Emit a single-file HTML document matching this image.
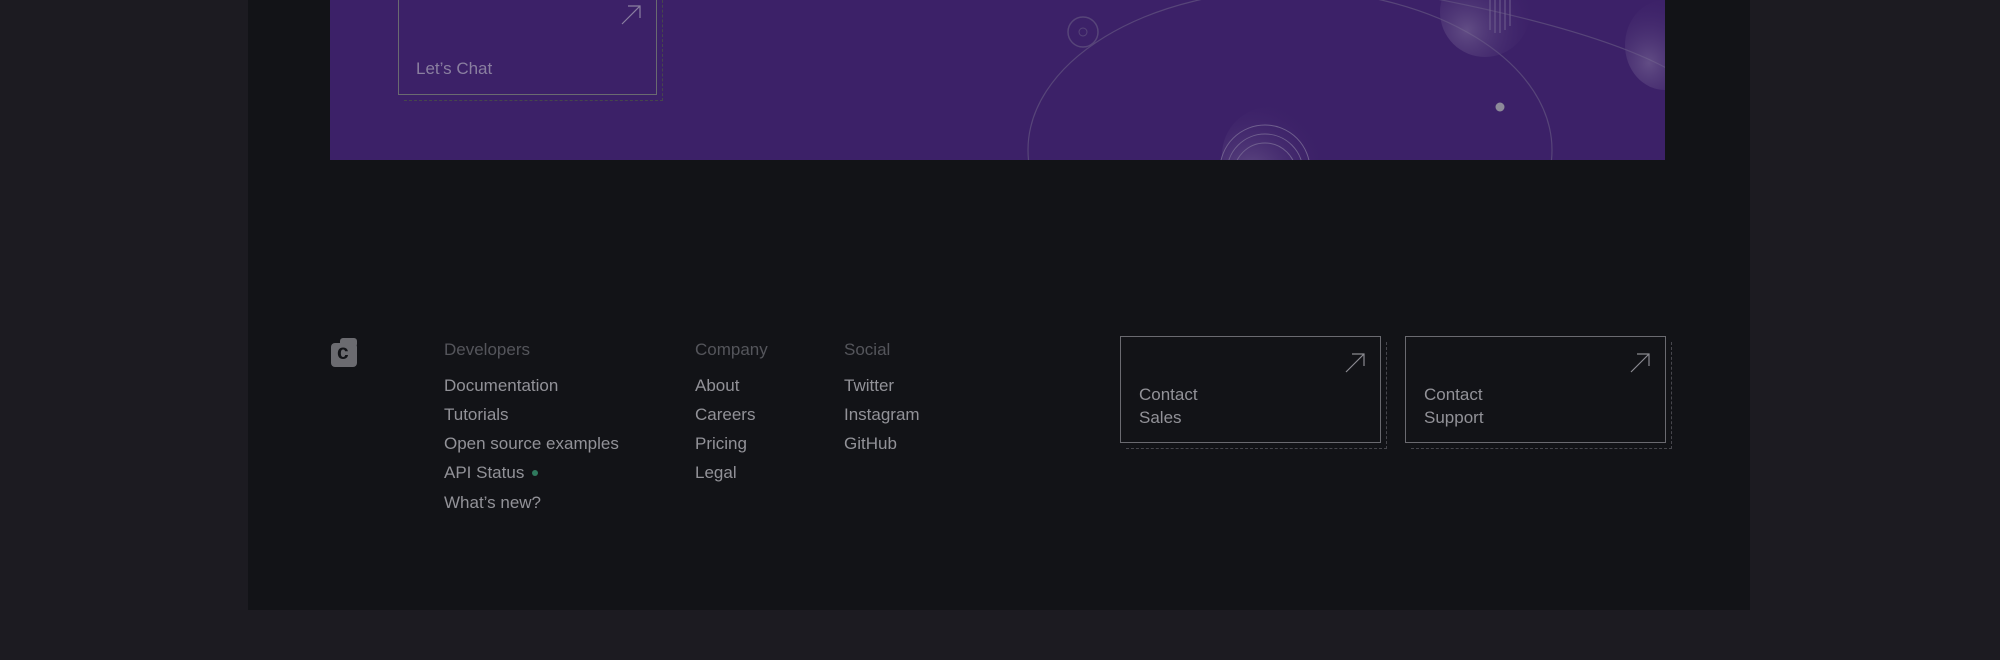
<!DOCTYPE html>
<html><head><style>
*{margin:0;padding:0;box-sizing:border-box}
body{width:2000px;height:660px;background:#1c1b21;position:relative;overflow:hidden;font-family:"Liberation Sans",sans-serif}
.panel{position:absolute;left:248px;top:0;width:1502px;height:610px;background:#121317}
.banner{position:absolute;left:330px;top:0;width:1335px;height:160px;background:#3c2168;overflow:hidden}
.abs{position:absolute}
.h{color:#54555b;font-size:17px}
.l{color:#929298;font-size:17px}
.box{position:absolute;border:1px solid #6a6a70}
.dash{position:absolute;border-right:1px dashed #46464c;border-bottom:1px dashed #46464c}
</style></head><body>
<div class="panel"></div>
<div class="banner">
<svg width="1335" height="160" class="abs" style="left:0;top:0">
<defs>
<radialGradient id="g1" cx="0.3" cy="0.7" r="0.8"><stop offset="0" stop-color="#7b6a98" stop-opacity=".6"/><stop offset="1" stop-color="#3c2168" stop-opacity="0"/></radialGradient>
</defs>
<ellipse cx="960" cy="150" rx="262" ry="160" fill="none" stroke="#574579" stroke-width="1.2"/>
<path d="M1000 -20 Q1250 20 1340 70" fill="none" stroke="#574579" stroke-width="1.2"/>
<circle cx="753" cy="32" r="15" fill="none" stroke="#574579" stroke-width="1.5"/>
<circle cx="753" cy="32" r="4" fill="none" stroke="#574579"/>
<circle cx="1155" cy="12" r="45" fill="url(#g1)"/>
<g stroke="#6f5f8e" stroke-width="1"><line x1="1160" y1="0" x2="1160" y2="30"/><line x1="1165" y1="0" x2="1165" y2="33"/><line x1="1170" y1="0" x2="1170" y2="33"/><line x1="1175" y1="0" x2="1175" y2="30"/><line x1="1180" y1="0" x2="1180" y2="26"/></g>
<circle cx="940" cy="155" r="48" fill="url(#g1)"/>
<g fill="none" stroke="#6f5f8e" stroke-width="1"><circle cx="935" cy="170" r="45"/><circle cx="935" cy="172" r="38"/><circle cx="935" cy="174" r="31"/></g>
<ellipse cx="1335" cy="45" rx="40" ry="45" fill="url(#g1)"/>
<circle cx="1170" cy="107" r="4.5" fill="#8d8a99"/>
</svg>
<div class="dash" style="left:74px;top:-10px;width:259px;height:111px"></div>
<div class="box" style="left:68px;top:-10px;width:259px;height:105px"></div>
<div class="abs l" style="left:86px;top:59px;color:#8a7fa0">Let’s Chat</div>
<svg class="abs" style="left:290px;top:4px" width="22" height="22"><path d="M2 20 L20 2 M8 2 H20 V14" fill="none" stroke="#8a7fa0" stroke-width="1.2"/></svg>
</div>
<div class="abs" style="left:331px;top:343px;width:26px;height:24px;background:#6b6b70;border-radius:4px"></div>
<div class="abs" style="left:340px;top:338px;width:17px;height:9px;background:#6b6b70;border-radius:3px"></div>
<div class="abs" style="left:337px;top:341px;color:#121317;font-weight:bold;font-size:21px">c</div>
<div class="abs h" style="left:444px;top:340px">Developers</div>
<div class="abs l" style="left:444px;top:376px">Documentation</div>
<div class="abs l" style="left:444px;top:405px">Tutorials</div>
<div class="abs l" style="left:444px;top:434px">Open source examples</div>
<div class="abs l" style="left:444px;top:463px">API Status</div>
<div class="abs" style="left:532px;top:470px;width:6px;height:6px;border-radius:50%;background:#2f7a5e"></div>
<div class="abs l" style="left:444px;top:493px">What’s new?</div>
<div class="abs h" style="left:695px;top:340px">Company</div>
<div class="abs l" style="left:695px;top:376px">About</div>
<div class="abs l" style="left:695px;top:405px">Careers</div>
<div class="abs l" style="left:695px;top:434px">Pricing</div>
<div class="abs l" style="left:695px;top:463px">Legal</div>
<div class="abs h" style="left:844px;top:340px">Social</div>
<div class="abs l" style="left:844px;top:376px">Twitter</div>
<div class="abs l" style="left:844px;top:405px">Instagram</div>
<div class="abs l" style="left:844px;top:434px">GitHub</div>
<div class="dash" style="left:1126px;top:342px;width:261px;height:107px"></div>
<div class="box" style="left:1120px;top:336px;width:261px;height:107px;background:#121317"></div>
<div class="abs l" style="left:1139px;top:383px;line-height:23px">Contact<br>Sales</div>
<svg class="abs" style="left:1344px;top:352px" width="22" height="22"><path d="M2 20 L20 2 M8 2 H20 V14" fill="none" stroke="#8a8a90" stroke-width="1.2"/></svg>
<div class="dash" style="left:1411px;top:342px;width:261px;height:107px"></div>
<div class="box" style="left:1405px;top:336px;width:261px;height:107px;background:#121317"></div>
<div class="abs l" style="left:1424px;top:383px;line-height:23px">Contact<br>Support</div>
<svg class="abs" style="left:1629px;top:352px" width="22" height="22"><path d="M2 20 L20 2 M8 2 H20 V14" fill="none" stroke="#8a8a90" stroke-width="1.2"/></svg>
</body></html>
